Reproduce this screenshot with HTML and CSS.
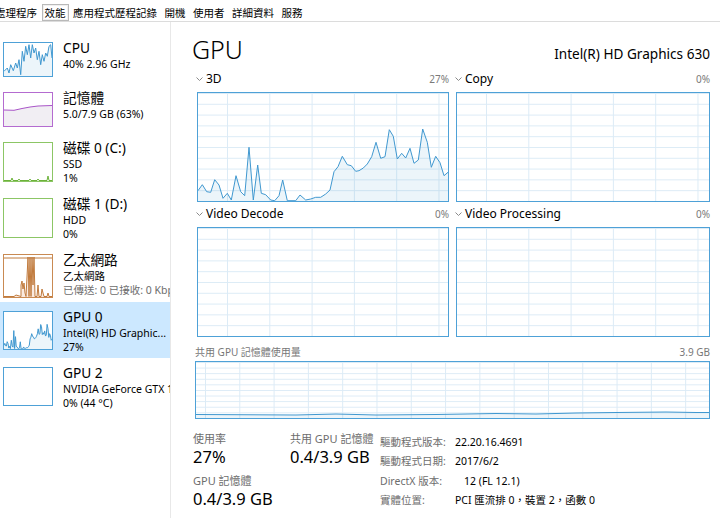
FILE: index.html
```html
<!DOCTYPE html>
<html lang="zh-Hant">
  <head>
    <meta charset="UTF-8" />
    <meta name="viewport" content="width=device-width, initial-scale=1.0" />
    <title>工作管理員 - 效能</title>
    <link rel="stylesheet" href="styles.css">
  </head>
  <body>
    <div class="tabs">
      <span class="tab">處理程序</span>
      <span class="tab active">效能</span>
      <span class="tab">應用程式歷程記錄</span>
      <span class="tab">開機</span>
      <span class="tab">使用者</span>
      <span class="tab">詳細資料</span>
      <span class="tab">服務</span>
    </div>

    <div class="app">
      <aside class="sidebar">
        <div class="item">
          <div class="thumb thumb-cpu">
            <svg viewBox="0 0 48 33" preserveAspectRatio="none">
              <polygon class="fill-cpu" points="0,28.3 3.3,25 5,30 6.7,21.7 9.3,27.7 11.7,20 13.3,25 15,16.7 16.7,31.7 18.3,8.3 20,18.3 21.7,3.3 23.3,11.7 25,1.7 26.7,15 28.3,1.7 30,10 31.7,5 33.3,16.7 35,8.3 36.7,21.7 38.3,11.7 40,18.3 41.7,10 43.3,13.3 45,3.3 46.7,1.7 48,15 48,33 0,33" />
              <polyline class="line-cpu" points="0,28.3 3.3,25 5,30 6.7,21.7 9.3,27.7 11.7,20 13.3,25 15,16.7 16.7,31.7 18.3,8.3 20,18.3 21.7,3.3 23.3,11.7 25,1.7 26.7,15 28.3,1.7 30,10 31.7,5 33.3,16.7 35,8.3 36.7,21.7 38.3,11.7 40,18.3 41.7,10 43.3,13.3 45,3.3 46.7,1.7 48,15" />
            </svg>
          </div>
          <div class="info">
            <div class="title">CPU</div>
            <div class="sub">40% 2.96 GHz</div>
          </div>
        </div>

        <div class="item">
          <div class="thumb thumb-mem">
            <svg viewBox="0 0 48 33" preserveAspectRatio="none">
              <polygon class="fill-mem" points="0,17 10,17.3 18,15.5 26,14 34,13 48,12.5 48,33 0,33" />
              <polyline class="line-mem" points="0,17 10,17.3 18,15.5 26,14 34,13 48,12.5" />
            </svg>
          </div>
          <div class="info">
            <div class="title">記憶體</div>
            <div class="sub">5.0/7.9 GB (63%)</div>
          </div>
        </div>

        <div class="item">
          <div class="thumb thumb-disk">
            <svg viewBox="0 0 48 38" preserveAspectRatio="none">
              <polyline class="line-disk" points="0,37.5 7,37.5 8,35 9,37.5 14,37.5 15,36 16,37.5 25,37.5 26,36 27,37.5 33,37.5 34,36 35,37.5 43,37.5 44,33 45,37.5 48,37.5" />
            </svg>
          </div>
          <div class="info">
            <div class="title">磁碟 0 (C:)</div>
            <div class="sub">SSD</div>
            <div class="sub">1%</div>
          </div>
        </div>

        <div class="item">
          <div class="thumb thumb-disk"></div>
          <div class="info">
            <div class="title">磁碟 1 (D:)</div>
            <div class="sub">HDD</div>
            <div class="sub">0%</div>
          </div>
        </div>

        <div class="item">
          <div class="thumb thumb-net">
            <svg viewBox="0 0 48 42" preserveAspectRatio="none">
              <line class="line-net" x1="0" y1="3" x2="48" y2="3" />
              <polygon class="fill-net" points="0,42 10,42 12,40 17,42 17,30 18,26 19,34 20,28 21,38 22,42 24,2 25,42 26,2 27,42 28,2 29,30 30,2 31,42 33,42 34,30 35,42 37,42 38,34 39,38 40,42 43,42 44,38 45,42 48,42" />
              <polyline class="line-net" points="0,41.5 10,41.5 12,40 17,41.5 17,30 18,26 19,34 20,28 21,38 22,41.5 24,2 25,41.5 26,2 27,41.5 28,2 29,30 30,2 31,41.5 33,41.5 34,30 35,41.5 37,41.5 38,34 39,38 40,41.5 43,41.5 44,38 45,41.5 48,41.5" />
            </svg>
          </div>
          <div class="info">
            <div class="title">乙太網路</div>
            <div class="sub">乙太網路</div>
            <div class="sub muted">已傳送: 0 已接收: 0 Kbps</div>
          </div>
        </div>

        <div class="item selected">
          <div class="thumb thumb-gpu">
            <svg viewBox="0 0 48 36" preserveAspectRatio="none">
              <polygon class="fill-gpu" points="0,32.5 0.8,30.5 1.7,32.9 2.4,33.1 3.2,28.9 4,30.6 4.8,35.1 5.6,33.4 6.4,35.6 7.3,27.5 8.2,32.9 9,34.2 9.8,18.1 10.6,35.6 11.5,24 12.2,33.4 13,33.9 14,35.6 14.7,35.9 15.6,34.2 16.3,29 17.1,35.9 18.8,35.9 19.6,34 20.7,35.6 21.6,35.3 22.6,34.7 23.6,34.7 24.5,33.6 25.3,32.3 26.1,26.2 26.9,24.5 27.7,21.1 28.7,23.9 29.4,24.2 30.3,26.1 30.9,25.9 31.7,25 32.5,23.6 33.4,21.2 34.2,16.4 35.1,21.7 35.9,21.2 36.7,12.2 37.5,14.4 38.3,22 39.1,20.1 39.9,21.7 40.7,18.4 41.5,23.4 42.3,22.3 43.1,12 44,16.4 44.8,24.7 45.6,21.1 46.5,23.2 47.2,27.5 48,26.4 48,36 0,36" />
              <polyline class="line-gpu" points="0,32.5 0.8,30.5 1.7,32.9 2.4,33.1 3.2,28.9 4,30.6 4.8,35.1 5.6,33.4 6.4,35.6 7.3,27.5 8.2,32.9 9,34.2 9.8,18.1 10.6,35.6 11.5,24 12.2,33.4 13,33.9 14,35.6 14.7,35.9 15.6,34.2 16.3,29 17.1,35.9 18.8,35.9 19.6,34 20.7,35.6 21.6,35.3 22.6,34.7 23.6,34.7 24.5,33.6 25.3,32.3 26.1,26.2 26.9,24.5 27.7,21.1 28.7,23.9 29.4,24.2 30.3,26.1 30.9,25.9 31.7,25 32.5,23.6 33.4,21.2 34.2,16.4 35.1,21.7 35.9,21.2 36.7,12.2 37.5,14.4 38.3,22 39.1,20.1 39.9,21.7 40.7,18.4 41.5,23.4 42.3,22.3 43.1,12 44,16.4 44.8,24.7 45.6,21.1 46.5,23.2 47.2,27.5 48,26.4" />
            </svg>
          </div>
          <div class="info">
            <div class="title">GPU 0</div>
            <div class="sub">Intel(R) HD Graphic...</div>
            <div class="sub">27%</div>
          </div>
        </div>

        <div class="item">
          <div class="thumb thumb-gpu"></div>
          <div class="info">
            <div class="title">GPU 2</div>
            <div class="sub">NVIDIA GeForce GTX 1050</div>
            <div class="sub">0% (44 °C)</div>
          </div>
        </div>
      </aside>

      <main class="detail">
        <div class="header">
          <h1>GPU</h1>
          <div class="model">Intel(R) HD Graphics 630</div>
        </div>

        <div class="engines">
          <div class="engine">
            <div class="engine-label">
              <span class="name"><svg class="chev" viewBox="0 0 7 4" width="7" height="4"><polyline points="0.5,0.5 3.5,3.5 6.5,0.5" /></svg>3D</span>
              <span class="pct">27%</span>
            </div>
            <div class="graph">
              <svg viewBox="0 0 250 108" preserveAspectRatio="none">
                <polygon class="fill-gpu" points="0,97.7 4.3,91.7 8.7,98.7 12.7,99.3 16.7,86.7 21,92 25,105.3 29.3,100.3 33.3,107 38,82.7 42.7,98.7 46.7,102.7 51,54.3 55.3,107 59.7,72 63.3,100.3 67.7,101.7 72.7,107 76.7,107.7 81,102.7 84.7,87 89.3,107.7 97.7,107.7 102,102 107.7,107 112.7,106 117.7,104.3 122.7,104.3 127.7,101 132,97 136,78.7 140,73.7 144.3,63.3 149.3,71.7 153.3,72.7 157.7,78.3 161,77.7 165.3,75 169.3,71 173.7,63.7 178,49.3 182.7,65.3 187,63.7 191.3,36.7 195.3,43.3 199.3,66 203.7,60.3 207.7,65 212,55.3 216,70.3 220.3,67 224.7,36 229.3,49.3 233.3,74.3 237.7,63.3 242,69.7 246,82.7 250,79.3 250,108 0,108" />
                <polyline class="line-gpu" points="0,97.7 4.3,91.7 8.7,98.7 12.7,99.3 16.7,86.7 21,92 25,105.3 29.3,100.3 33.3,107 38,82.7 42.7,98.7 46.7,102.7 51,54.3 55.3,107 59.7,72 63.3,100.3 67.7,101.7 72.7,107 76.7,107.7 81,102.7 84.7,87 89.3,107.7 97.7,107.7 102,102 107.7,107 112.7,106 117.7,104.3 122.7,104.3 127.7,101 132,97 136,78.7 140,73.7 144.3,63.3 149.3,71.7 153.3,72.7 157.7,78.3 161,77.7 165.3,75 169.3,71 173.7,63.7 178,49.3 182.7,65.3 187,63.7 191.3,36.7 195.3,43.3 199.3,66 203.7,60.3 207.7,65 212,55.3 216,70.3 220.3,67 224.7,36 229.3,49.3 233.3,74.3 237.7,63.3 242,69.7 246,82.7 250,79.3" />
              </svg>
            </div>
          </div>

          <div class="engine">
            <div class="engine-label">
              <span class="name"><svg class="chev" viewBox="0 0 7 4" width="7" height="4"><polyline points="0.5,0.5 3.5,3.5 6.5,0.5" /></svg>Copy</span>
              <span class="pct">0%</span>
            </div>
            <div class="graph"></div>
          </div>

          <div class="engine">
            <div class="engine-label">
              <span class="name"><svg class="chev" viewBox="0 0 7 4" width="7" height="4"><polyline points="0.5,0.5 3.5,3.5 6.5,0.5" /></svg>Video Decode</span>
              <span class="pct">0%</span>
            </div>
            <div class="graph"></div>
          </div>

          <div class="engine">
            <div class="engine-label">
              <span class="name"><svg class="chev" viewBox="0 0 7 4" width="7" height="4"><polyline points="0.5,0.5 3.5,3.5 6.5,0.5" /></svg>Video Processing</span>
              <span class="pct">0%</span>
            </div>
            <div class="graph"></div>
          </div>
        </div>

        <div class="shared">
          <div class="shared-label">
            <span>共用 GPU 記憶體使用量</span>
            <span>3.9 GB</span>
          </div>
          <div class="graph shared-graph">
            <svg viewBox="0 0 513 56" preserveAspectRatio="none">
              <polygon class="fill-gpu" points="0,52.5 100,53 140,52 180,53 240,52.5 300,51.5 340,52 380,51 420,50.5 470,50 500,50.5 513,50.5 513,56 0,56" />
              <polyline class="line-gpu" points="0,52.5 100,53 140,52 180,53 240,52.5 300,51.5 340,52 380,51 420,50.5 470,50 500,50.5 513,50.5" />
            </svg>
          </div>
        </div>

        <div class="stats">
          <div class="stat-col">
            <div class="stat-label">使用率</div>
            <div class="stat-value">27%</div>
            <div class="stat-label spaced">GPU 記憶體</div>
            <div class="stat-value">0.4/3.9 GB</div>
          </div>
          <div class="stat-col stat-col-wide">
            <div class="stat-label">共用 GPU 記憶體</div>
            <div class="stat-value">0.4/3.9 GB</div>
          </div>
          <table class="props">
            <tr><th>驅動程式版本:</th><td>22.20.16.4691</td></tr>
            <tr><th>驅動程式日期:</th><td>2017/6/2</td></tr>
            <tr><th>DirectX 版本:</th><td class="indent">12 (FL 12.1)</td></tr>
            <tr><th>實體位置:</th><td>PCI 匯流排 0，裝置 2，函數 0</td></tr>
          </table>
        </div>
      </main>
    </div>
  </body>
</html>
```

FILE: styles.css
```css
* {
  box-sizing: border-box;
}
body {
  margin: 0;
  width: 720px;
  height: 518px;
  overflow: hidden;
  font-family: "Noto Sans", "Noto Sans CJK TC", sans-serif;
  color: #000;
  background-color: #fff;
}

/* tab strip */
.tabs {
  display: flex;
  height: 22px;
  padding-top: 4px;
  border-bottom: 1px solid #dcdcdc;
  white-space: nowrap;
  overflow: hidden;
  font-family: "Noto Sans CJK TC", sans-serif;
  font-size: 10.5px;
}
.tab {
  height: 17px;
  line-height: 15px;
  padding: 0 2px;
  margin-right: 1.5px;
  border: 1px solid transparent;
}
.tab:first-child {
  margin-left: -8px;
}
.tab.active {
  border-color: #b9b9b9;
  box-shadow: inset 0 0 0 1px #f0f0f0;
}

.app {
  display: flex;
  height: 496px;
}

/* left list */
.sidebar {
  flex: none;
  width: 171px;
  padding-top: 11px;
  border-right: 1px solid #e8e8e8;
  overflow: hidden;
}
.item {
  display: flex;
  align-items: flex-start;
  gap: 10px;
  min-height: 50px;
  padding: 5px 0 4px 3px;
  white-space: nowrap;
}
.item.selected {
  background-color: #cce8ff;
}
.thumb {
  flex: none;
  width: 50px;
  height: 40px;
  margin-top: 4px;
  border: 1px solid;
  background-color: #fff;
}
.thumb svg {
  display: block;
  width: 100%;
  height: 100%;
}
.thumb-cpu {
  height: 35px;
  border-color: #4ea1d7;
}
.thumb-mem {
  height: 35px;
  border-color: #b46bd0;
}
.thumb-disk {
  border-color: #8cc665;
}
.thumb-net {
  height: 44px;
  border-color: #c98a52;
}
.thumb-gpu {
  height: 39px;
  border-color: #4ea1d7;
}
.title {
  font-size: 13.7px;
  line-height: 19px;
}
.sub {
  font-size: 10.5px;
  line-height: 14px;
}
.sub.muted {
  color: #6d6d6d;
}

/* graph lines */
polyline,
line {
  fill: none;
  stroke-width: 1;
  vector-effect: non-scaling-stroke;
}
.line-cpu,
.line-gpu {
  stroke: #4098d0;
}
.fill-cpu,
.fill-gpu {
  fill: rgba(17, 125, 187, 0.08);
}
.line-mem {
  stroke: #a955c8;
}
.fill-mem {
  fill: #f1eef3;
}
.line-disk {
  stroke: #6cb23a;
}
.line-net {
  stroke: #c07a3c;
}
.fill-net {
  fill: rgba(230, 150, 100, 0.2);
}

/* right panel */
.detail {
  flex: 1;
  padding: 12px 10px 0 24px;
}
.header {
  display: flex;
  justify-content: space-between;
  align-items: baseline;
  height: 30px;
}
.header h1 {
  margin: 0 0 0 -3px;
  font-size: 25px;
  font-weight: 300;
  line-height: 30px;
}
.model {
  font-size: 13.6px;
}
.engines {
  display: grid;
  grid-template-columns: 252px 1fr;
  column-gap: 7px;
  row-gap: 4px;
  margin-top: 7px;
  padding-left: 2px;
}
.engine-label {
  display: flex;
  justify-content: space-between;
  align-items: flex-start;
  height: 21px;
  margin-left: -1px;
  font-size: 12px;
  line-height: 16px;
  white-space: nowrap;
}
.engine-label .pct {
  font-size: 10px;
  color: #7a7a7a;
}
.chev {
  margin: 0 3px 2px 0;
  vertical-align: middle;
}
.chev polyline {
  stroke: #8a8a8a;
}
.graph {
  height: 110px;
  border: 1px solid #4ea1d7;
  background-color: #fff;
  background-image:
    linear-gradient(to right, #dcebf6 1px, transparent 1px),
    linear-gradient(to bottom, #dcebf6 1px, transparent 1px);
  background-size: 42.3px 100%, 100% 10.8px;
  background-position: 29px 0, 0 0;
}
.graph svg {
  display: block;
  width: 100%;
  height: 100%;
}
.shared {
  margin-top: 7px;
}
.shared-label {
  display: flex;
  justify-content: space-between;
  height: 17px;
  font-size: 10px;
  line-height: 16px;
  color: #777;
}
.shared-graph {
  height: 58px;
  background-size: 34.3px 100%, 100% 5.6px;
  background-position: 9px 0, 0 0;
}

/* numbers under the graphs */
.stats {
  display: flex;
  margin: 13px 0 0 -2px;
}
.stat-col {
  width: 97px;
}
.stat-col-wide {
  width: 90px;
}
.stat-label {
  font-size: 11px;
  line-height: 14px;
  color: #6d6d6d;
}
.stat-label.spaced {
  margin-top: 6px;
}
.stat-value {
  font-size: 16.5px;
  line-height: 22px;
}
.props {
  border-collapse: collapse;
  font-size: 10.5px;
  line-height: 16px;
}
.props th {
  width: 75px;
  padding: 0;
  font-weight: normal;
  text-align: left;
  color: #6d6d6d;
  white-space: nowrap;
}
.props td {
  padding: 0;
  white-space: nowrap;
}
.props .indent {
  padding-left: 9px;
}
```
